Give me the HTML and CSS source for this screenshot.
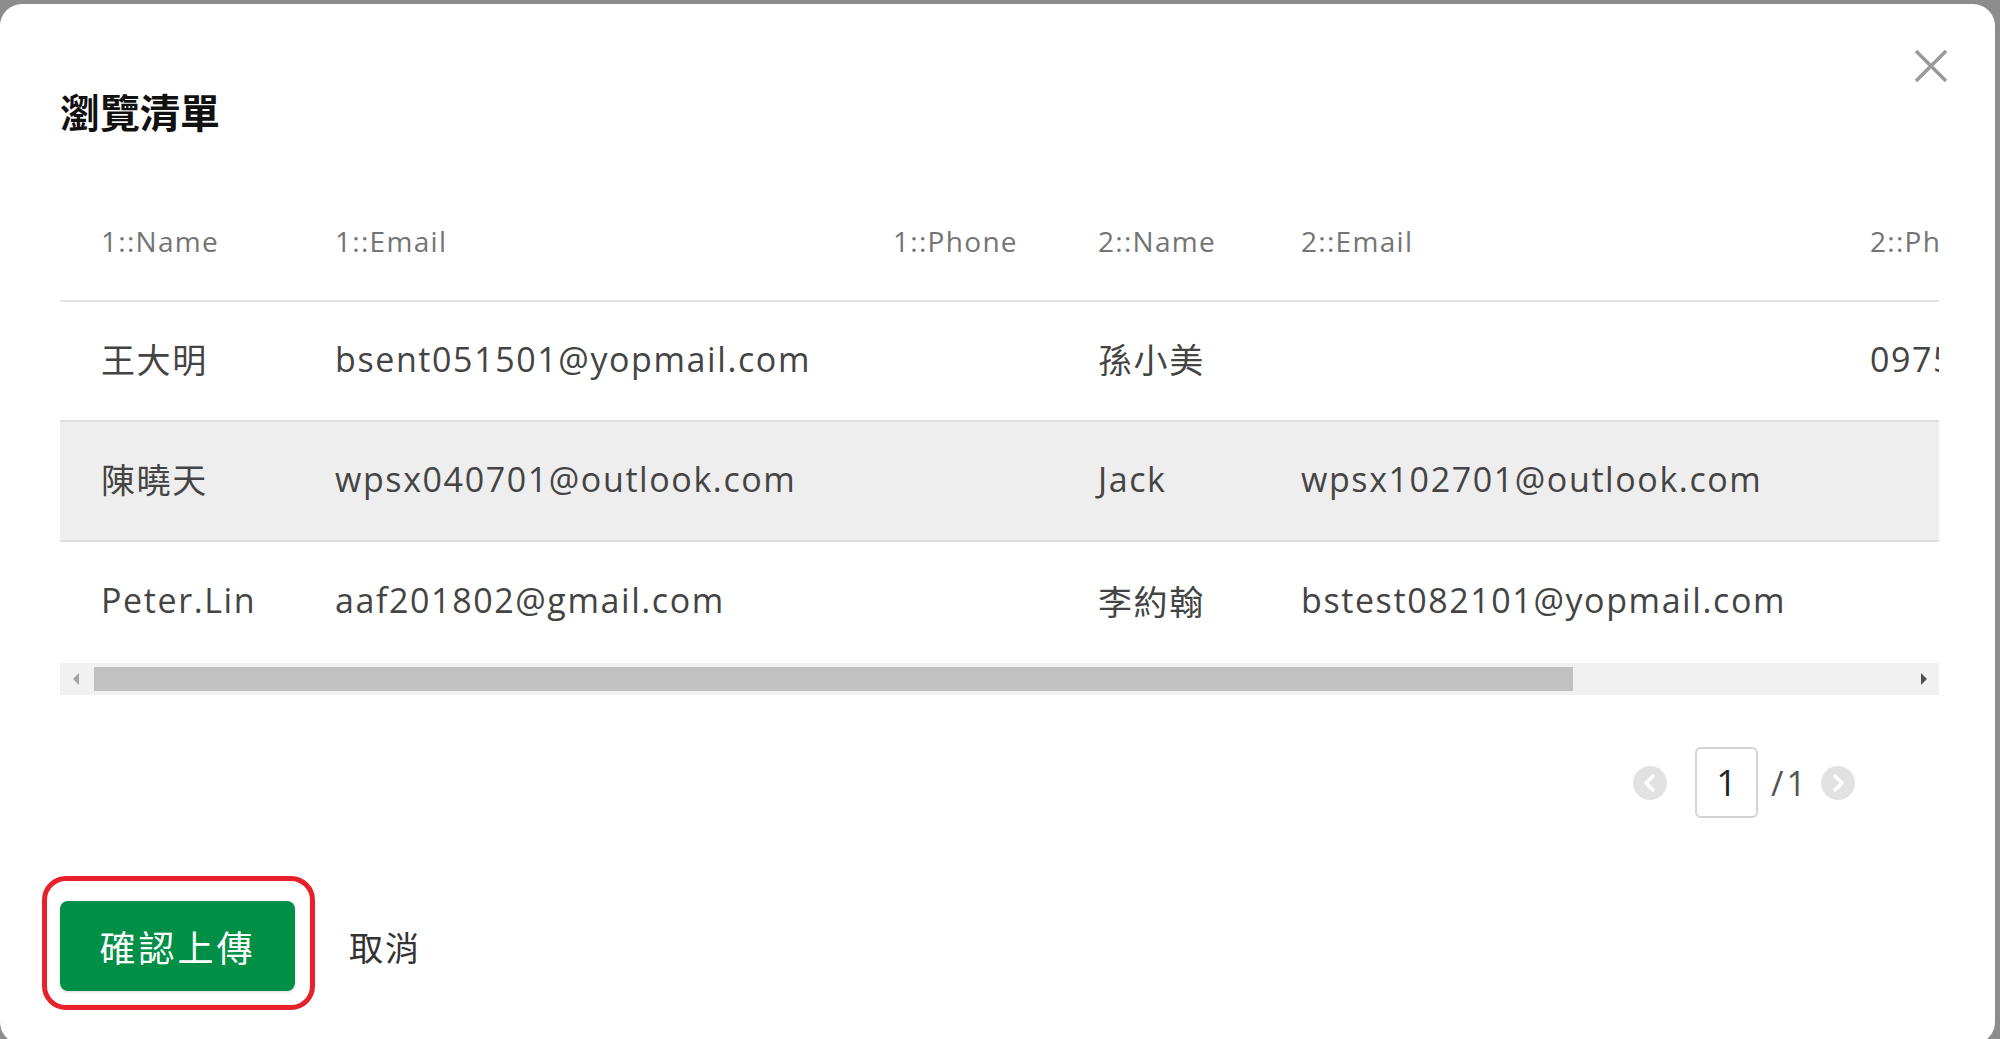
FILE: index.html
```html
<!DOCTYPE html>
<html lang="zh-Hant">
<head>
<meta charset="utf-8">
<title>瀏覽清單</title>
<link rel="stylesheet" href="styles.css">
</head>
<body>
<div class="dialog">
  <button class="close" aria-label="close">
    <svg viewBox="0 0 34 34" width="34" height="34"><path d="M2 2 L32 32 M32 2 L2 32" stroke="#9a9a9a" stroke-width="3.5" fill="none"/></svg>
  </button>
  <h1 class="title">瀏覽清單</h1>
  <div class="table-wrap">
    <table class="grid">
      <colgroup>
        <col class="c1"><col class="c2"><col class="c3"><col class="c4"><col class="c5"><col class="c6">
      </colgroup>
      <thead>
        <tr><th>1::Name</th><th>1::Email</th><th>1::Phone</th><th>2::Name</th><th>2::Email</th><th>2::Phone</th></tr>
      </thead>
      <tbody>
        <tr><td>王大明</td><td>bsent051501@yopmail.com</td><td></td><td>孫小美</td><td></td><td>0975123456</td></tr>
        <tr class="alt"><td>陳曉天</td><td>wpsx040701@outlook.com</td><td></td><td>Jack</td><td>wpsx102701@outlook.com</td><td></td></tr>
        <tr class="last"><td>Peter.Lin</td><td>aaf201802@gmail.com</td><td></td><td>李約翰</td><td>bstest082101@yopmail.com</td><td></td></tr>
      </tbody>
    </table>
  </div>
  <div class="hscroll">
    <span class="arrow arrow-left"></span>
    <div class="track"><div class="thumb"></div></div>
    <span class="arrow arrow-right"></span>
  </div>
  <div class="pager">
    <span class="pg-btn">
      <svg viewBox="0 0 34 34" width="34" height="34"><circle cx="17" cy="17" r="17" fill="#e2e2e2"/><path d="M20 10 L13 17 L20 24" stroke="#fff" stroke-width="3.5" fill="none" stroke-linecap="round" stroke-linejoin="round"/></svg>
    </span>
    <span class="pg-box">1</span>
    <span class="pg-total">/1</span>
    <span class="pg-btn">
      <svg viewBox="0 0 34 34" width="34" height="34"><circle cx="17" cy="17" r="17" fill="#e2e2e2"/><path d="M14 10 L21 17 L14 24" stroke="#fff" stroke-width="3.5" fill="none" stroke-linecap="round" stroke-linejoin="round"/></svg>
    </span>
  </div>
  <div class="footer">
    <div class="confirm-wrap">
      <button class="confirm">確認上傳</button>
      <span class="highlight"></span>
    </div>
    <button class="cancel">取消</button>
  </div>
</div>
</body>
</html>
```
FILE: styles.css
```css
html, body {
  margin: 0;
  padding: 0;
}
body {
  background: #8d8d8d;
  width: 2000px;
  height: 1039px;
  overflow: hidden;
  font-family: "Open Sans", "Noto Sans CJK TC", sans-serif;
}
.dialog {
  position: relative;
  box-sizing: border-box;
  margin: 4px 5px 0 0;
  height: 1040px;
  background: #fff;
  border-radius: 22px;
  padding: 83px 56px 0 60px;
  display: flex;
  flex-direction: column;
}
.close {
  position: absolute;
  top: 45px;
  right: 47px;
  width: 34px;
  height: 34px;
  padding: 0;
  border: 0;
  background: none;
}
.close svg { display: block; }
.title {
  margin: 0 0 46px;
  font-family: "Noto Sans CJK TC", sans-serif;
  font-size: 40px;
  line-height: 48px;
  font-weight: 700;
  color: #111;
}
.table-wrap {
  width: 1879px;
  overflow: hidden;
}
.grid {
  border-collapse: collapse;
  table-layout: fixed;
  width: 1989px;
}
.c1 { width: 234px; }
.c2 { width: 558px; }
.c3 { width: 205px; }
.c4 { width: 203px; }
.c5 { width: 569px; }
.c6 { width: 220px; }
.grid th {
  height: 119px;
  padding: 0 0 0 41px;
  text-align: left;
  font-weight: 400;
  font-size: 28px;
  letter-spacing: 1.3px;
  color: #747474;
  white-space: nowrap;
  overflow: hidden;
  border-bottom: 2px solid #e3e3e3;
}
.grid td {
  box-sizing: border-box;
  height: 120px;
  padding: 0 0 5px 41px;
  font-size: 34px;
  letter-spacing: 1.6px;
  color: #444;
  white-space: nowrap;
  overflow: hidden;
  border-bottom: 2px solid #dedede;
}
.grid tr.alt td { background: #eeeeee; }
.grid tr.last td { border-bottom: 0; height: 122px; }
.hscroll {
  width: 1879px;
  height: 32px;
  background: #f1f1f1;
  display: flex;
  align-items: center;
}
.arrow {
  width: 0;
  height: 0;
  border-top: 6px solid transparent;
  border-bottom: 6px solid transparent;
}
.arrow-left {
  margin: 0 10px 0 13px;
  border-right: 6px solid #a3a3a3;
}
.arrow-right {
  margin: 0 12px 0 10px;
  border-left: 6px solid #505050;
}
.track {
  flex: 1;
  height: 24px;
  padding-left: 5px;
}
.thumb {
  width: 1479px;
  height: 24px;
  background: #c1c1c1;
}
.pager {
  margin-top: 52px;
  padding-right: 84px;
  display: flex;
  justify-content: flex-end;
  align-items: center;
  height: 71px;
}
.pg-btn { display: block; width: 34px; height: 34px; }
.pg-btn svg { display: block; }
.pg-box {
  box-sizing: border-box;
  margin-left: 28px;
  width: 63px;
  height: 71px;
  border: 2px solid #d4d4d4;
  border-radius: 6px;
  display: flex;
  align-items: center;
  justify-content: center;
  font-size: 36px;
  color: #222;
}
.pg-total {
  margin: 0 12px 0 13px;
  font-size: 34px;
  color: #555;
  letter-spacing: 3px;
}
.footer {
  margin-top: 83px;
  display: flex;
  align-items: center;
}
.confirm-wrap {
  position: relative;
}
.confirm {
  display: block;
  width: 235px;
  height: 90px;
  border: 0;
  border-radius: 8px;
  background: #008f46;
  color: #fff;
  font-family: "Noto Sans CJK TC", sans-serif;
  font-size: 36px;
  letter-spacing: 3px;
  box-shadow: 0 1px 3px rgba(0,0,0,0.15);
}
.highlight {
  position: absolute;
  top: -25px;
  left: -18px;
  right: -20px;
  bottom: -19px;
  border: 5px solid #e8202a;
  border-radius: 24px;
  pointer-events: none;
}
.cancel {
  margin-left: 54px;
  padding: 0;
  border: 0;
  background: none;
  font-family: "Noto Sans CJK TC", sans-serif;
  font-size: 34px;
  color: #333;
  letter-spacing: 2px;
}
```
